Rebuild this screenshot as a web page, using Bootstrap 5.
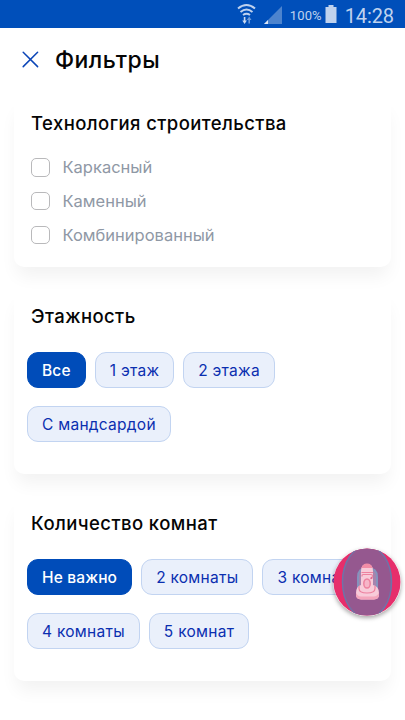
<!DOCTYPE html>
<html lang="ru">
<head>
<meta charset="utf-8">
<meta name="viewport" content="width=device-width, initial-scale=1">
<title>Фильтры</title>
<link href="https://cdn.jsdelivr.net/npm/bootstrap@5.3.0/dist/css/bootstrap.min.css" rel="stylesheet">
<style>
body{font-family:Inter,"Open Sans",sans-serif;background:#fff;color:#050505;height:720px;overflow:hidden}
.status{height:28px;background:#004fba;color:#bfd2ee;font-family:Roboto,sans-serif;padding-right:11px}
.pct{font-size:13px;letter-spacing:.1px;margin:3px 3px 0 7px}
.clock{font-size:20px;letter-spacing:-.1px;margin:3px 0 0 8px}
.heading{height:62px;padding-left:22px}
.heading h1{font-size:23px;font-weight:500;letter-spacing:.45px;margin-left:16px;padding-top:3px}
.close-btn{line-height:0}
.panels{padding:8px 14px 0;gap:24px}
.panel{border-radius:10px;background:#fff;box-shadow:0 12px 18px -3px rgba(0,0,0,.055);padding:0 13px}
.panel h2{font-size:18.5px;line-height:24px;font-weight:500;letter-spacing:.42px;margin:0 0 0 4px;padding-top:13px}
.tech{height:169px}
.chips-panel{height:183px}
.checks{padding:15.5px 0 0 4px}
.check-row{height:33.8px;gap:13px;color:#8f98a5;font-size:16.5px}
.check-row .form-check-input{width:18.5px;height:18.5px;border:1.5px solid #b9b9bb;border-radius:5px}
.chips{padding-top:24px;column-gap:9px;row-gap:18px;margin-right:-8px}
.chip{height:36px;padding:0 14px;border:1px solid #c2d4f1;border-radius:11px;background:#eaf0fb;color:#0a2fb0;font-size:15.5px;line-height:33px;letter-spacing:.27px}
.chip.on{background:#004cb9;border-color:#004cb9;color:#fff;font-weight:500;letter-spacing:.15px}
.fab{left:333px;top:548px;line-height:0;z-index:5;border-radius:50%;box-shadow:0 2px 4px rgba(0,0,0,.35)}
</style>
</head>
<body>
<header class="status d-flex align-items-center justify-content-end">
<svg width="46" height="26" viewBox="0 0 46 26" fill="none">
<g stroke="#bfd2ee" stroke-width="2"><path d="M1 7.500Q9.500 .500 18 7.500"/><path d="M3.500 11Q9.500 6 15.500 11"/><path d="M6 14Q9.500 11.500 13 14"/></g>
<path d="M6.800 16h1.600v3.500h1.500L7.600 23l-2.300-3.500h1.500z" fill="#cbdaf1"/><path d="M11.400 22.500h1.600V19h1.500l-2.300-3.500L9.900 19h1.500z" fill="#6d9ad8"/>
<path d="M45 5v18H27z" fill="#4d84ce"/><path d="M31 19v4H27z" fill="#dce7f7"/>
</svg>
<span class="pct">100%</span>
<svg width="12" height="20" viewBox="0 0 12 20"><path d="M3.500 1h5v2H11.500v16H.500V3h3z" fill="#bfd2ee"/></svg>
<span class="clock">14:28</span>
</header>
<div class="heading d-flex align-items-center">
<a href="#" class="close-btn" aria-label="Закрыть"><svg width="17" height="17" viewBox="0 0 17 17"><path d="M1.200 1.200l14.400 14.400M15.600 1.200L1.200 15.600" stroke="#0b45b7" stroke-width="1.500" stroke-linecap="round"/></svg></a>
<h1 class="mb-0">Фильтры</h1>
</div>
<main class="panels d-flex flex-column">
<section class="panel tech">
<h2>Технология строительства</h2>
<div class="checks">
<label class="check-row d-flex align-items-center"><input class="form-check-input m-0" type="checkbox"><span>Каркасный</span></label>
<label class="check-row d-flex align-items-center"><input class="form-check-input m-0" type="checkbox"><span>Каменный</span></label>
<label class="check-row d-flex align-items-center"><input class="form-check-input m-0" type="checkbox"><span>Комбинированный</span></label>
</div>
</section>
<section class="panel chips-panel">
<h2>Этажность</h2>
<div class="chips d-flex flex-wrap">
<button class="btn chip on">Все</button><button class="btn chip">1 этаж</button><button class="btn chip">2 этажа</button><button class="btn chip">С мандсардой</button>
</div>
</section>
<section class="panel chips-panel">
<h2>Количество комнат</h2>
<div class="chips d-flex flex-wrap">
<button class="btn chip on">Не важно</button><button class="btn chip">2 комнаты</button><button class="btn chip">3 комнаты</button><button class="btn chip">4 комнаты</button><button class="btn chip">5 комнат</button>
</div>
</section>
</main>
<div class="fab position-absolute">
<svg width="68" height="68" viewBox="0 0 68 68" fill="none">
<defs><clipPath id="disc"><circle cx="34" cy="34" r="33.500"/></clipPath></defs>
<circle cx="34" cy="34" r="33.500" fill="#e62e6b"/>
<ellipse cx="34" cy="34" rx="24.500" ry="36" fill="#95588f" stroke="#6f73a8" stroke-width="1.500" clip-path="url(#disc)"/>
<path d="M25 42V29Q25 20 34.500 20T44 29v13" fill="#a783ad" stroke="#8593bd" stroke-width="2"/>
<path d="M28 23q0-7 6-7t6 7v14q6 1.500 6 8v2q0 4-5 4.500H28q-5-.500-5-4.500v-2q0-6.500 5-8z" fill="#f8cbd9"/>
<path d="M28.500 20q1-4.500 5.500-4.500t5.500 4.500z" fill="#f28da7"/>
<path d="M28.500 24.500h11.500M29 28.500v-1q0-1 1-1h8q1.500 0 1.500 1.500t-2 3M26 38v2.500q0 4.500 8 4.500t8-4.500V38" stroke="#ed819f" stroke-width="1.200"/>
<path d="M23 44.500q1.500 4 5 4h12.500q4 0 5.500-4V47q0 4-5 4.500H28q-5-.500-5-4.500z" fill="#f4a6bc"/>
<ellipse cx="34" cy="35.500" rx="3.200" ry="4.600" fill="#f6b5c8" stroke="#ed819f" stroke-width="1.500"/><circle cx="38.500" cy="30" r="1" fill="#d96692"/>
</svg>
</div>
<script src="https://cdn.jsdelivr.net/npm/bootstrap@5.3.0/dist/js/bootstrap.bundle.min.js"></script>
</body>
</html>
